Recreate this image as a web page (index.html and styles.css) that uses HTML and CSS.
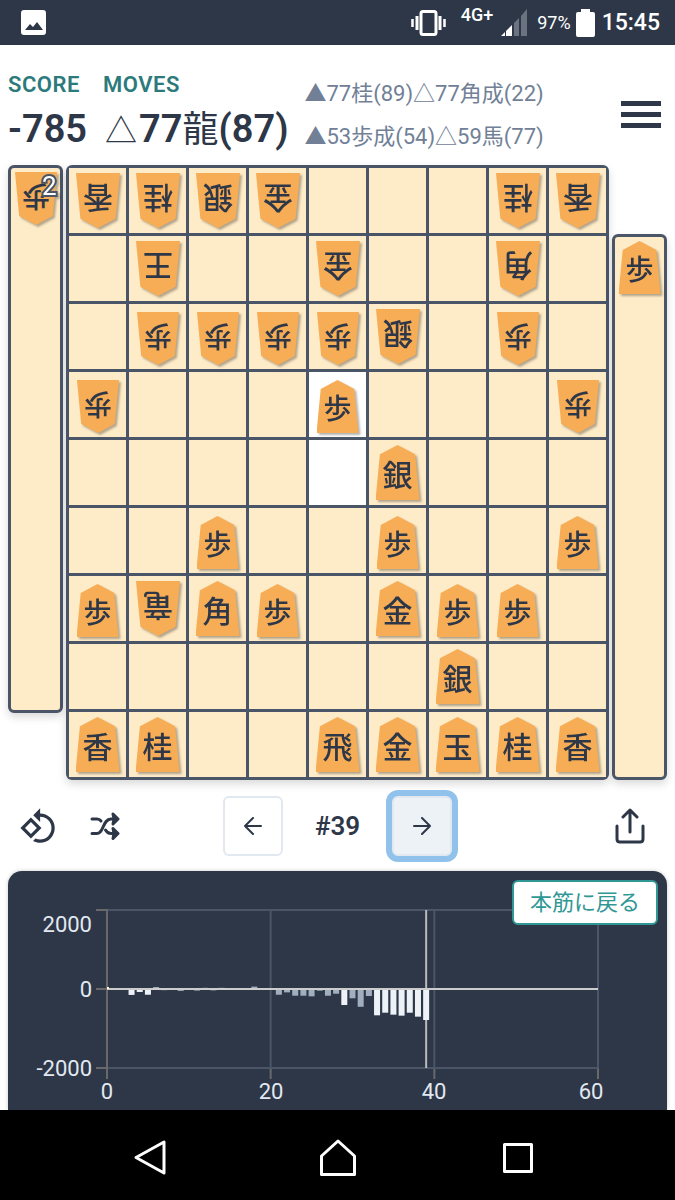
FILE: index.html
```html
<!DOCTYPE html>
<html lang="ja">
<head>
    <meta charset="UTF-8">
    <meta name="viewport" content="width=device-width, initial-scale=1.0">
    <title>Shogi Board</title>
    <link rel="stylesheet" href="styles.css">
</head>
<body>
    <div class="status-bar">
        <svg class="photo" width="25" height="25" viewBox="0 0 25 25">
            <rect width="25" height="25" rx="3" fill="#fff"/>
            <path d="M4 20l5-6 3 3 4-5 6 8z" fill="#2d3748"/>
        </svg>
        <svg width="35" height="26" viewBox="0 0 35 26" fill="none" stroke="#fff">
            <rect x="10" y="1.500" width="15" height="23" rx="2" stroke-width="3"/>
            <path d="M6 6v14M29 6v14" stroke-width="3"/>
            <path d="M1.500 9v8M33.500 9v8" stroke-width="2.500"/>
        </svg>
        <span class="network">4G+</span>
        <svg class="signal" width="26" height="27" viewBox="0 0 26 27">
            <path d="M0 27l4-4v4zM5 22l6-6v11H5z" fill="#fff"/>
            <path d="M13 14l5-5v18h-5zM20 7l6-7v27h-6z" fill="#6c7380"/>
        </svg>
        <span class="percent">97%</span>
        <svg class="battery" width="19" height="28" viewBox="0 0 19 28">
            <path d="M5 0h9v3h3a2 2 0 0 1 2 2v21a2 2 0 0 1-2 2H2a2 2 0 0 1-2-2V5a2 2 0 0 1 2-2h3z" fill="#fff"/>
        </svg>
        <span class="clock">15:45</span>
    </div>

    <header>
        <div class="info">
            <h2>SCORE</h2>
            <p>-785</p>
        </div>
        <div class="info">
            <h2>MOVES</h2>
            <p><span class="side">△</span>77<span>龍</span>(87)</p>
        </div>
        <div class="history">
            <p>▲77桂(89)△77角成(22)</p>
            <p>▲53歩成(54)△59馬(77)</p>
        </div>
        <button class="menu-btn" aria-label="Menu">
            <svg width="40" height="27" viewBox="0 0 40 27" fill="#2d3748">
                <path d="M0 0h40v5H0zM0 11h40v5H0zM0 22h40v5H0z"/>
            </svg>
        </button>
    </header>

    <main>
        <div class="game">
            <div class="hand hand-top" id="hand-top"></div>
            <div class="board" id="board"></div>
            <div class="hand hand-bottom" id="hand-bottom"></div>
        </div>

        <div class="controls">
            <div class="tools">
                <button class="icon-btn" aria-label="Rotate board">
                    <svg width="39" height="39" viewBox="0 0 24 24" fill="#2d3748">
                        <path d="M7.340 6.410L.86 12.900l6.490 6.480 6.490-6.480-6.500-6.490zM3.690 12.900l3.660-3.660L11 12.900l-3.660 3.660-3.650-3.660zm15.670-6.260C17.610 4.880 15.300 4 13 4V.76L8.760 5 13 9.240V6c1.790 0 3.580.68 4.950 2.050 2.730 2.730 2.730 7.170 0 9.900C16.580 19.320 14.790 20 13 20c-.97 0-1.940-.21-2.840-.61l-1.490 1.490C10.020 21.620 11.510 22 13 22c2.300 0 4.610-.88 6.360-2.640 3.520-3.510 3.520-9.210 0-12.720z"/>
                    </svg>
                </button>
                <button class="icon-btn" aria-label="Shuffle">
                    <svg width="30" height="30" viewBox="0 0 30 30" fill="none" stroke="#2d3748" stroke-width="3" stroke-linecap="round" stroke-linejoin="round">
                        <path d="M2 8h5q2.500 0 4 2M2 22.500h5c7 0 5.500-14.500 14-14.500h5"/>
                        <path d="M15.500 19q2 3.500 5.500 3.500h5"/>
                        <path d="M23 3l5 5-5 5 1-5zM23 17.500l5 5-5 5 1-5z" fill="#2d3748" stroke-width="3"/>
                    </svg>
                </button>
            </div>
            <div class="stepper">
                <button class="step-btn" aria-label="Previous move">
                    <svg width="18" height="18" viewBox="0 0 18 18" fill="none" stroke="#2d3748" stroke-width="2" stroke-linecap="round" stroke-linejoin="round">
                        <path d="M17 9H1M9 1L1 9l8 8"/>
                    </svg>
                </button>
                <span class="move-no">#39</span>
                <button class="step-btn active" aria-label="Next move">
                    <svg width="18" height="18" viewBox="0 0 18 18" fill="none" stroke="#2d3748" stroke-width="2" stroke-linecap="round" stroke-linejoin="round">
                        <path d="M1 9h16M9 1l8 8-8 8"/>
                    </svg>
                </button>
            </div>
            <button class="icon-btn share-btn" aria-label="Share">
                <svg width="30" height="36" viewBox="0 0 30 36" fill="none" stroke="#2d3748" stroke-width="3" stroke-linecap="round" stroke-linejoin="round">
                    <path d="M15 24V2M8 9l7-7 7 7M2 18v13q0 3 3 3h20q3 0 3-3V18"/>
                </svg>
            </button>
        </div>

        <div class="chart-card">
            <svg id="chart" viewBox="0 0 659 239"></svg>
            <button class="back-btn">本筋に戻る</button>
        </div>
    </main>

    <nav class="nav-bar">
        <button aria-label="Back">
            <svg width="52" height="38" viewBox="0 0 52 38" fill="none" stroke="#fff" stroke-width="3" stroke-linejoin="round">
                <path d="M32 3v31L4 18.500z"/>
            </svg>
        </button>
        <button aria-label="Home">
            <svg width="38" height="38" viewBox="0 0 38 38" fill="none" stroke="#fff" stroke-width="3" stroke-linejoin="round">
                <path d="M19 2l16.500 15v18.500h-33V17z"/>
            </svg>
        </button>
        <button aria-label="Recent apps">
            <svg width="32" height="32" viewBox="0 0 32 32" fill="none" stroke="#fff" stroke-width="3" stroke-linejoin="round">
                <path d="M2.500 2.500h27v27h-27z"/>
            </svg>
        </button>
    </nav>

    <script src="script.js"></script>
</body>
</html>
```
FILE: styles.css
```css
*{
    margin: 0;
    padding: 0;
    box-sizing: border-box;
}
body{
    min-height: 100vh;
    display: flex;
    flex-direction: column;
    background: #fff;
    color: #2d3748;
    font-family: Roboto, "Noto Sans CJK JP", sans-serif;
}
svg{
    display: block;
}
button{
    font-family: inherit;
    background: none;
    border: none;
    cursor: pointer;
}
.status-bar{
    height: 45px;
    padding: 0 15px 0 21px;
    display: flex;
    align-items: center;
    background: #2d3748;
    color: #fff;
}
.photo{
    margin-right: auto;
}
.network{
    align-self: flex-start;
    margin: 5px 8px 0 15px;
    font-size: 18px;
    font-weight: 500;
    line-height: 20px;
}
.percent{
    margin: 0 5px 0 10px;
    font-size: 18px;
}
.clock{
    margin-left: 7px;
    font-size: 23px;
    font-weight: 500;
}
header{
    height: 120px;
    padding: 24px 14px 0 8px;
    display: flex;
    align-items: flex-start;
}
.info{
    margin-right: 16px;
}
.info h2{
    font-size: 22px;
    line-height: 32px;
    font-weight: 600;
    letter-spacing: 0.5px;
    color: #2c7a7b;
}
.info p{
    font-size: 38px;
    line-height: 56px;
    font-weight: 600;
    white-space: nowrap;
}
.info span{
    font-size: 36px;
    font-weight: 400;
}
.info .side{
    padding: 0 2px;
    font-size: 32px;
}
.history{
    padding-top: 3px;
    font-size: 22px;
    line-height: 43px;
    color: #718096;
    white-space: nowrap;
}
.menu-btn{
    margin: 32px 0 0 auto;
}
main{
    flex: 1;
    padding: 0 8px;
    display: flex;
    flex-direction: column;
}
.game{
    display: grid;
    grid-template-columns: 55fr 543fr 55fr;
    gap: 3px;
}
.board{
    display: grid;
    grid-template-columns: repeat(9, 1fr);
    grid-auto-rows: 65px;
    gap: 3px;
    padding: 3px;
    background: #4a5568;
    border-radius: 6px;
    box-shadow: 0 4px 8px rgba(0, 0, 0, 0.15);
}
.cell{
    display: flex;
    align-items: center;
    justify-content: center;
    background: #feebc8;
}
.cell.marked{
    background: #fff;
}
.hand{
    display: flex;
    justify-content: center;
    align-items: flex-start;
    padding-top: 4px;
    background: #feebc8;
    border: 3px solid #4a5568;
    border-radius: 6px;
    box-shadow: 0 4px 8px rgba(0, 0, 0, 0.15);
}
.hand-top{
    margin-bottom: 67px;
}
.hand-bottom{
    margin-top: 69px;
}
.piece{
    position: relative;
    filter: drop-shadow(2px 2px 1px rgba(0, 0, 0, 0.3));
}
.face{
    width: 44px;
    height: 55px;
    padding-top: 7px;
    display: flex;
    align-items: center;
    justify-content: center;
    background: #f6ad55;
    clip-path: polygon(50% 0, 90% 17%, 100% 100%, 0 100%, 10% 17%);
    font-size: 30px;
    font-weight: 500;
    line-height: 30px;
}
.pawn{
    width: 42px;
    height: 53px;
    font-size: 28px;
}
.cell .piece.small{
    margin-top: 4px;
}
.flip{
    transform: rotate(180deg);
}
.count{
    position: absolute;
    top: 1px;
    right: 0;
    font-size: 26px;
    line-height: 26px;
    color: #fff;
    -webkit-text-stroke: 4px #4a5568;
    paint-order: stroke fill;
}
.controls{
    padding: 16px 0 15px;
    display: grid;
    grid-template-columns: 1fr auto 1fr;
    align-items: center;
}
.tools{
    display: flex;
    align-items: center;
    gap: 32px;
    padding-left: 11px;
}
.stepper{
    display: flex;
    align-items: center;
    gap: 32px;
}
.step-btn{
    width: 60px;
    height: 60px;
    display: flex;
    align-items: center;
    justify-content: center;
    border: 2px solid #e2e8f0;
    border-radius: 6px;
}
.step-btn.active{
    background: #edf2f7;
    box-shadow: 0 0 0 6px #90c2ec;
}
.move-no{
    font-size: 26px;
    font-weight: 600;
}
.share-btn{
    justify-self: end;
    margin-right: 22px;
}
.chart-card{
    flex: 1;
    position: relative;
    background: #2d3748;
    border-radius: 14px 14px 0 0;
    box-shadow: 0 0 4px rgba(0, 0, 0, 0.2);
}
#chart{
    width: 100%;
}
#chart text{
    font-size: 22px;
    fill: #e2e8f0;
}
.back-btn{
    position: absolute;
    top: 9px;
    right: 9px;
    width: 146px;
    height: 45px;
    padding-bottom: 5px;
    background: #fff;
    border: 2px solid #319795;
    border-radius: 6px;
    color: #319795;
    font-size: 22px;
}
.nav-bar{
    height: 90px;
    padding: 6px 10% 0;
    display: grid;
    grid-template-columns: repeat(3, 1fr);
    align-items: center;
    justify-items: center;
    background: #000;
}
```
FILE: script.js
```js
const rows = [
    "v香 v桂 v銀 v金 . . . v桂 v香",
    ". v王 . . v金 . . v角 .",
    ". v歩 v歩 v歩 v歩 v銀 . v歩 .",
    "v歩 . . . 歩 . . . v歩",
    ". . . . . 銀 . . .",
    ". . 歩 . . 歩 . . 歩",
    "歩 v竜 角 歩 . 金 歩 歩 .",
    ". . . . . . 銀 . .",
    "香 桂 . . 飛 金 玉 桂 香"
];
const marked = ["3-4", "4-4"];

// [move, score, strong colour]
const scores = [
    [1, -10, 1], [2, -15, 1], [3, -150, 1], [4, -75, 1], [5, -145, 1], [6, 50, 0],
    [7, -30, 0], [9, -40, 1], [11, -40, 0], [12, 30, 0], [13, -35, 0],
    [14, 30, 0], [16, 20, 0], [18, 60, 0], [20, 20, 0], [21, -145, 0],
    [22, -85, 0], [23, -170, 0], [24, -170, 0], [25, -185, 0], [26, -43, 0],
    [27, -170, 0], [28, -120, 0], [29, -405, 1], [30, -235, 0], [31, -450, 0],
    [32, -177, 0], [33, -666, 1], [34, -600, 1], [35, -650, 1], [36, -675, 1],
    [37, -600, 1], [38, -700, 1], [39, -785, 1]
];

function createPiece(code, count) {
    const piece = document.createElement("div");
    const face = document.createElement("div");
    const name = code.replace("v", "");
    piece.className = "piece";
    face.className = "face";
    face.textContent = name;
    if (name === "歩") {
        piece.classList.add("small");
        face.classList.add("pawn");
    }
    if (code[0] === "v") {
        face.classList.add("flip");
    }
    piece.appendChild(face);
    if (count) {
        const badge = document.createElement("span");
        badge.className = "count";
        badge.textContent = count;
        piece.appendChild(badge);
    }
    return piece;
}

function showBoard() {
    const board = document.getElementById("board");
    rows.forEach((row, y) => {
        row.split(" ").forEach((code, x) => {
            const cell = document.createElement("div");
            cell.className = "cell";
            if (marked.includes(y + "-" + x)) {
                cell.classList.add("marked");
            }
            if (code !== ".") {
                cell.appendChild(createPiece(code));
            }
            board.appendChild(cell);
        });
    });
    document.getElementById("hand-top").appendChild(createPiece("v歩", 2));
    document.getElementById("hand-bottom").appendChild(createPiece("歩"));
}

function showChart() {
    const left = 99, right = 590, top = 39, zero = 118, bottom = 197;
    const step = (right - left) / 60;
    let svg = "";

    [20, 40, 60].forEach(n => {
        const x = left + n * step;
        svg += `<path d="M${x} ${top}V${bottom}" stroke="#4a5568" stroke-width="2"/>`;
        svg += `<path d="M${x} ${bottom}v11" stroke="#69696c" stroke-width="2"/>`;
    });
    svg += `<path d="M${left} ${top}H${right}M${left} ${bottom}H${right}" stroke="#4a5568" stroke-width="2"/>`;
    svg += `<path d="M${left - 11} ${top}h11V${bottom + 11}M${left - 11} ${zero}h11M${left - 11} ${bottom}h11" fill="none" stroke="#69696c" stroke-width="2"/>`;

    // cursor of the current move
    svg += `<path d="M${left + 39 * step} ${top}V${bottom}" stroke="#bbbbbb" stroke-width="2"/>`;

    scores.forEach(([move, score, strong]) => {
        const height = Math.abs(score) / 2000 * (zero - top);
        const y = score > 0 ? zero - height : zero;
        svg += `<rect x="${left + move * step - 3}" y="${y}" width="6" height="${height}" fill="${strong ? "#edf2f7" : "#a0aec0"}"/>`;
    });
    svg += `<path d="M${left} ${zero}H${right}" stroke="#cccccc" stroke-width="2"/>`;
    svg += `<rect x="${left}" y="${zero - 2}" width="2" height="2" fill="#fefcbf"/>`;

    svg += `<text x="84" y="61" text-anchor="end">2000</text>`;
    svg += `<text x="84" y="126" text-anchor="end">0</text>`;
    svg += `<text x="84" y="205" text-anchor="end">-2000</text>`;
    svg += `<text x="99" y="228" text-anchor="middle">0</text>`;
    svg += `<text x="263" y="228" text-anchor="middle">20</text>`;
    svg += `<text x="426" y="228" text-anchor="middle">40</text>`;
    svg += `<text x="583" y="228" text-anchor="middle">60</text>`;
    document.getElementById("chart").innerHTML = svg;
}

showBoard();
showChart();
```
